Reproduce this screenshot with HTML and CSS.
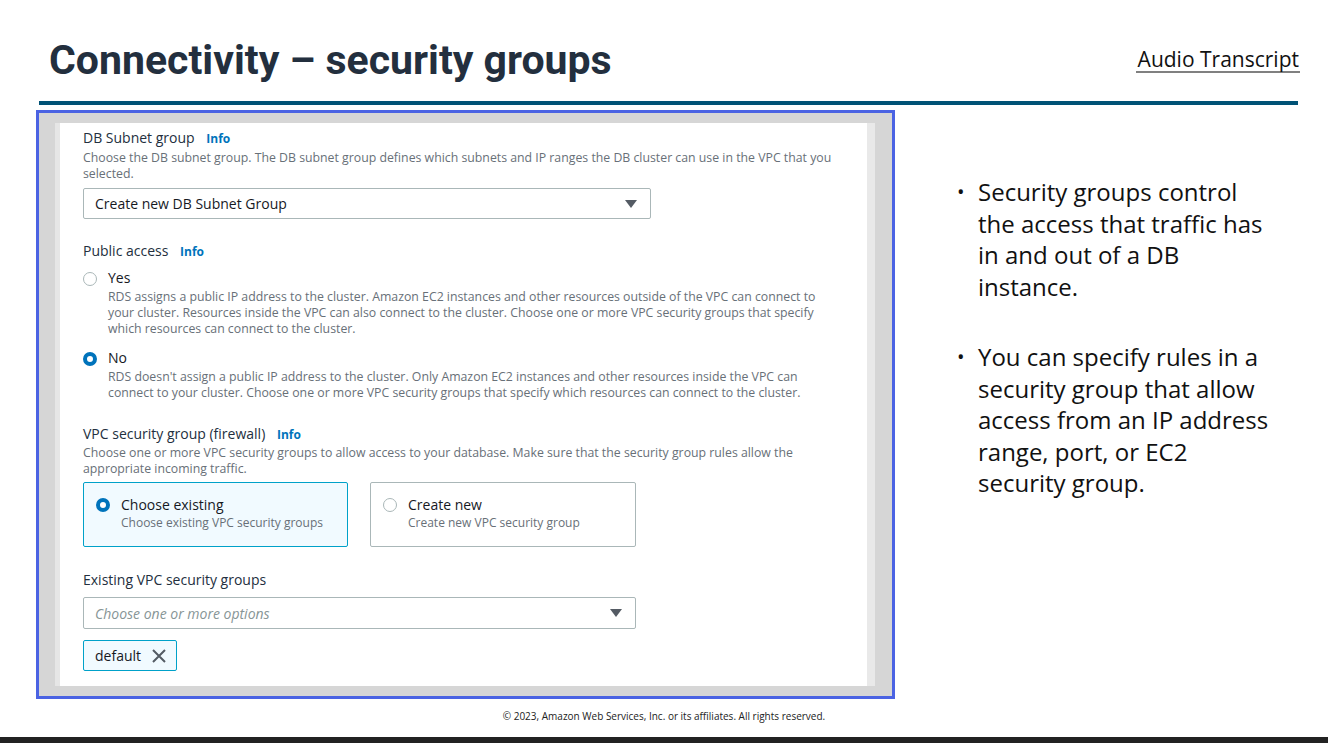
FILE: index.html
```html
<!DOCTYPE html>
<html lang="en">
<head>
<meta charset="utf-8">
<title>Connectivity – security groups</title>
<link rel="stylesheet" href="styles.css">
</head>
<body>
<div class="page">
  <header class="header">
    <h1 class="title">Connectivity – security groups</h1>
    <a class="audio" href="#">Audio Transcript</a>
  </header>
  <div class="rule"></div>
  <main class="main">
    <div class="shot">
      <div class="panel">
        <div class="form">
          <div class="label">DB Subnet group <span class="info">Info</span></div>
          <div class="desc">Choose the DB subnet group. The DB subnet group defines which subnets and IP ranges the DB cluster can use in the VPC that you selected.</div>
          <div class="select select-subnet">
            <span class="select-text">Create new DB Subnet Group</span>
            <svg class="caret" width="12" height="8" viewBox="0 0 12 8"><path d="M0 0h12L6 8z" fill="#545b64"/></svg>
          </div>

          <div class="label label-public">Public access <span class="info">Info</span></div>
          <div class="radio-row radio-yes">
            <span class="radio"></span>
            <div class="radio-body">
              <div class="radio-title">Yes</div>
              <div class="desc">RDS assigns a public IP address to the cluster. Amazon EC2 instances and other resources outside of the VPC can connect to your cluster. Resources inside the VPC can also connect to the cluster. Choose one or more VPC security groups that specify which resources can connect to the cluster.</div>
            </div>
          </div>
          <div class="radio-row radio-no">
            <span class="radio radio-on"></span>
            <div class="radio-body">
              <div class="radio-title">No</div>
              <div class="desc">RDS doesn't assign a public IP address to the cluster. Only Amazon EC2 instances and other resources inside the VPC can connect to your cluster. Choose one or more VPC security groups that specify which resources can connect to the cluster.</div>
            </div>
          </div>

          <div class="label label-vpc">VPC security group (firewall) <span class="info">Info</span></div>
          <div class="desc desc-vpc">Choose one or more VPC security groups to allow access to your database. Make sure that the security group rules allow the appropriate incoming traffic.</div>
          <div class="tiles">
            <div class="tile tile-on">
              <span class="radio radio-on"></span>
              <div class="tile-body">
                <div class="radio-title">Choose existing</div>
                <div class="tile-sub">Choose existing VPC security groups</div>
              </div>
            </div>
            <div class="tile">
              <span class="radio"></span>
              <div class="tile-body">
                <div class="radio-title">Create new</div>
                <div class="tile-sub">Create new VPC security group</div>
              </div>
            </div>
          </div>

          <div class="label label-existing">Existing VPC security groups</div>
          <div class="select select-groups">
            <span class="placeholder">Choose one or more options</span>
            <svg class="caret" width="12" height="8" viewBox="0 0 12 8"><path d="M0 0h12L6 8z" fill="#545b64"/></svg>
          </div>
          <div class="token">
            <span class="token-text">default</span>
            <svg class="token-x" width="16" height="16" viewBox="0 0 16 16"><path d="M2 2l12 12M14 2L2 14" stroke="#545b64" stroke-width="2" fill="none"/></svg>
          </div>
        </div>
      </div>
    </div>
    <ul class="bullets">
      <li>Security groups control the access that traffic has in and out of a DB instance.</li>
      <li>You can specify rules in a security group that allow access from an IP address range, port, or EC2 security group.</li>
    </ul>
  </main>
  <footer class="footer">© 2023, Amazon Web Services, Inc. or its affiliates. All rights reserved.</footer>
  <div class="bar"></div>
</div>
</body>
</html>
```

FILE: styles.css
```css
* { box-sizing: border-box; }
html, body { margin: 0; padding: 0; background: #ffffff; }
body { width: 1328px; height: 743px; overflow: hidden; }

.page {
  width: 1328px;
  height: 743px;
  display: flex;
  flex-direction: column;
}

.header {
  height: 101px;
  display: flex;
  justify-content: space-between;
  align-items: flex-start;
  padding: 40px 28px 0 49px;
}

.title {
  margin: 0;
  font-family: Roboto, "Liberation Sans", sans-serif;
  font-weight: 700;
  font-size: 41px;
  line-height: 41px;
  color: #232f3e;
}

.audio {
  margin-top: 7px;
  font-family: "Open Sans", "Noto Sans", sans-serif;
  font-size: 21px;
  line-height: 24px;
  color: #111111;
  text-decoration: none;
  border-bottom: 2px solid #808080;
  padding: 0 1px 0 2px;
}

.rule {
  height: 4px;
  margin-left: 39px;
  width: 1259px;
  background: #005276;
}

.main {
  display: flex;
  align-items: flex-start;
  padding: 5px 0 0 36px;
}

.shot {
  width: 859px;
  height: 589px;
  border: 3px solid #4b63e3;
  background: #d6d6d6;
  padding: 10px 17px 10px 16px;
  flex-shrink: 0;
}

.panel {
  height: 100%;
  background: #ffffff;
  border-left: 5px solid #e6e6e6;
  border-right: 8px solid #e9e9e9;
}

.form {
  padding: 5px 0 0 23px;
  font-family: "Open Sans", "Noto Sans", sans-serif;
  color: #16191f;
}

.label {
  font-size: 14px;
  line-height: 20px;
  color: #232f3e;
}

.info {
  margin-left: 8px;
  font-size: 12px;
  font-weight: 700;
  color: #0073bb;
}

.desc {
  margin-top: 1px;
  font-size: 12.3px;
  line-height: 16px;
  color: #687078;
  width: 758px;
}

.select {
  height: 32px;
  border: 1px solid #aab7b8;
  border-radius: 2px;
  display: flex;
  align-items: center;
  justify-content: space-between;
  padding: 0 13px 0 11px;
  font-size: 14px;
}

.select-subnet { width: 568px; height: 31px; margin-top: 6px; color: #16191f; }
.select-groups { width: 553px; margin-top: 7px; }

.placeholder {
  font-style: italic;
  color: #879596;
}

.label-public { margin-top: 22px; }

.radio-row {
  display: flex;
  align-items: flex-start;
  margin-top: 6px;
}
.radio-no { margin-top: 11px; }

.radio {
  flex-shrink: 0;
  width: 14px;
  height: 14px;
  border-radius: 50%;
  border: 1.5px solid #aab7b8;
  background: #ffffff;
  margin-top: 4px;
}
.radio-on {
  border: 4px solid #0073bb;
}

.radio-body { margin-left: 11px; }
.radio-body .desc { width: 722px; }

.radio-title {
  font-size: 14px;
  line-height: 20px;
  color: #16191f;
}

.label-vpc { margin-top: 23px; }
.desc-vpc { margin-top: 0; width: 722px; }

.tiles {
  display: flex;
  gap: 22px;
  margin-top: 5px;
}

.tile {
  width: 266px;
  height: 65px;
  border: 1px solid #aab7b8;
  border-radius: 2px;
  display: flex;
  align-items: flex-start;
  padding: 12px 0 0 12px;
}
.tile:first-child { width: 265px; }
.tile-on {
  border-color: #00a1c9;
  background: #f1faff;
}
.tile .radio { margin-top: 3px; }
.tile-body { margin-left: 11px; }
.tile-sub {
  font-size: 12px;
  line-height: 16px;
  color: #687078;
}

.label-existing { margin-top: 23px; }

.token {
  margin-top: 11px;
  width: 94px;
  height: 31px;
  border: 1px solid #00a1c9;
  border-radius: 2px;
  background: #f1faff;
  display: flex;
  align-items: center;
  padding: 0 0 0 11px;
  font-size: 14px;
  color: #16191f;
}
.token-x { margin-left: 10px; }

.bullets {
  list-style: none;
  margin: 66px 0 0 63px;
  padding: 0;
  width: 320px;
  font-family: "Open Sans", "Noto Sans", sans-serif;
  font-size: 24px;
  line-height: 31.5px;
  color: #111111;
}
.bullets li {
  position: relative;
  padding-left: 20px;
  margin-bottom: 39px;
}
.bullets li::before {
  content: "•";
  position: absolute;
  left: -1px;
  top: 0;
  font-size: 20px;
}

.footer {
  margin-top: auto;
  text-align: center;
  font-family: "Open Sans", "Noto Sans", sans-serif;
  font-size: 10px;
  line-height: 12px;
  color: #222222;
  padding-bottom: 15px;
}

.bar {
  height: 6px;
  background: #222222;
}
```
